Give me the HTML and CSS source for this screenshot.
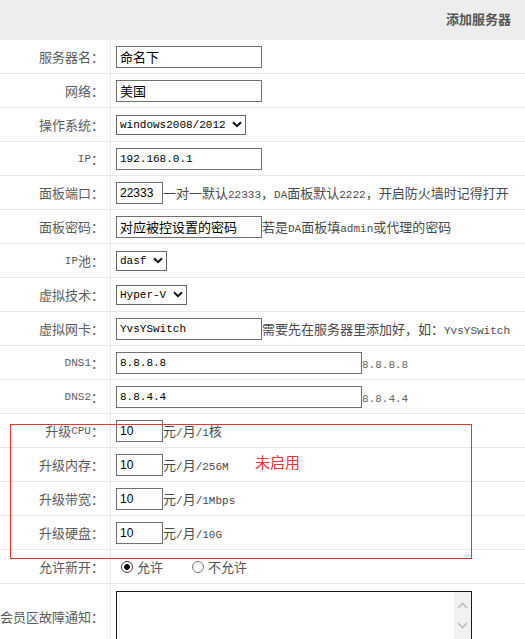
FILE: index.html
```html
<!DOCTYPE html>
<html>
<head>
<meta charset="utf-8">
<title>添加服务器</title>
<link rel="stylesheet" href="styles.css">
</head>
<body>
<div class="page">
  <div class="head">添加服务器</div>
  <div class="form">
    <div class="lbl">服务器名：</div>
    <div class="val"><input class="txt w146" value="命名下"></div>

    <div class="lbl">网络：</div>
    <div class="val"><input class="txt w146" value="美国"></div>

    <div class="lbl">操作系统：</div>
    <div class="val">
      <span class="sel"><select><option>windows2008/2012</option></select><svg class="chev" width="10" height="7" viewBox="0 0 10 7"><path d="M1 1.2L5 5.2L9 1.2" fill="none" stroke="#111" stroke-width="2"/></svg></span>
    </div>

    <div class="lbl"><span class="en">IP</span>：</div>
    <div class="val"><input class="txt mono w146" value="192.168.0.1"></div>

    <div class="lbl">面板端口：</div>
    <div class="val"><input class="txt sans w47" value="22333"><span class="hint">一对一默认<span class="en">22333</span>，<span class="en">DA</span>面板默认<span class="en">2222</span>，开启防火墙时记得打开</span></div>

    <div class="lbl">面板密码：</div>
    <div class="val"><input class="txt w146" value="对应被控设置的密码"><span class="hint">若是<span class="en">DA</span>面板填<span class="en">admin</span>或代理的密码</span></div>

    <div class="lbl"><span class="en">IP</span>池：</div>
    <div class="val">
      <span class="sel"><select><option>dasf</option></select><svg class="chev" width="10" height="7" viewBox="0 0 10 7"><path d="M1 1.2L5 5.2L9 1.2" fill="none" stroke="#111" stroke-width="2"/></svg></span>
    </div>

    <div class="lbl">虚拟技术：</div>
    <div class="val">
      <span class="sel"><select><option>Hyper-V</option></select><svg class="chev" width="10" height="7" viewBox="0 0 10 7"><path d="M1 1.2L5 5.2L9 1.2" fill="none" stroke="#111" stroke-width="2"/></svg></span>
    </div>

    <div class="lbl">虚拟网卡：</div>
    <div class="val"><input class="txt mono w146" value="YvsYSwitch"><span class="hint">需要先在服务器里添加好，如：<span class="en">YvsYSwitch</span></span></div>

    <div class="lbl"><span class="en">DNS1</span>：</div>
    <div class="val"><input class="txt mono w246" value="8.8.8.8"><span class="hint light"><span class="en">8.8.8.8</span></span></div>

    <div class="lbl"><span class="en">DNS2</span>：</div>
    <div class="val"><input class="txt mono w246" value="8.8.4.4"><span class="hint light"><span class="en">8.8.4.4</span></span></div>

    <div class="lbl">升级<span class="en">CPU</span>：</div>
    <div class="val"><input class="txt sans w47" value="10"><span class="hint">元<span class="en">/</span>月<span class="en">/1</span>核</span></div>

    <div class="lbl">升级内存：</div>
    <div class="val"><input class="txt sans w47" value="10"><span class="hint">元<span class="en">/</span>月<span class="en">/256M</span></span></div>

    <div class="lbl">升级带宽：</div>
    <div class="val"><input class="txt sans w47" value="10"><span class="hint">元<span class="en">/</span>月<span class="en">/1Mbps</span></span></div>

    <div class="lbl">升级硬盘：</div>
    <div class="val"><input class="txt sans w47" value="10"><span class="hint">元<span class="en">/</span>月<span class="en">/10G</span></span></div>

    <div class="lbl">允许新开：</div>
    <div class="val">
      <label class="opt"><input type="radio" name="allow" checked>允许</label>
      <label class="opt"><input type="radio" name="allow">不允许</label>
    </div>

    <div class="lbl">会员区故障通知：</div>
    <div class="val tall">
      <div class="ta">
        <textarea></textarea>
        <div class="sb">
          <svg width="11" height="7" viewBox="0 0 11 7"><path d="M1 6L5.5 1.5L10 6" fill="none" stroke="#bdbdbd" stroke-width="1.6"/></svg>
          <svg width="11" height="7" viewBox="0 0 11 7"><path d="M1 1L5.5 5.5L10 1" fill="none" stroke="#bdbdbd" stroke-width="1.6"/></svg>
        </div>
      </div>
    </div>
  </div>
  <div class="redbox"><span class="note">未启用</span></div>
</div>
</body>
</html>
```

FILE: styles.css
```css
* { box-sizing: border-box; }
html, body { margin: 0; padding: 0; background: #fff; }
body {
  font-family: "Noto Sans CJK SC", sans-serif;
  font-size: 13px;
  color: #5c5c5c;
}
.page { position: relative; width: 525px; }
.head {
  height: 40px;
  background: #ededed;
  text-align: right;
  padding-right: 14px;
  font-weight: bold;
  line-height: 38px;
  color: #555;
}
.form { display: grid; grid-template-columns: 111px 1fr; }
.lbl, .val {
  min-height: 34px;
  border-bottom: 1px solid #e8e8e8;
  display: flex;
  align-items: center;
  white-space: nowrap;
}
.lbl {
  justify-content: flex-end;
  padding-right: 6px;
  border-right: 1px solid #e8e8e8;
}
.val { padding-left: 5px; }
.val.tall { align-items: flex-start; padding-top: 7px; padding-bottom: 5px; }
.en { font-family: "Liberation Mono", monospace; font-size: 11px; }
.hint { color: #4a4a4a; }
.hint.light { color: #666; }
.txt {
  height: 22px;
  margin: 0;
  padding: 0 3px;
  border: 1px solid #707070;
  background: #fff;
  color: #000;
  font-family: "Noto Sans CJK SC", sans-serif;
  font-size: 13px;
  outline: none;
}
.txt.mono { font-family: "Liberation Mono", monospace; font-size: 11px; }
.txt.sans { font-family: "Liberation Sans", sans-serif; font-size: 12px; }
.w146 { width: 146px; }
.w47 { width: 47px; }
.w246 { width: 246px; }
.sel {
  display: inline-flex;
  align-items: center;
  gap: 6px;
  height: 20px;
  padding: 0 3px;
  border: 1px solid #666;
  background: #fff;
}
.sel select {
  appearance: none;
  -webkit-appearance: none;
  border: 0;
  margin: 0;
  padding: 0;
  background: transparent;
  color: #000;
  font-family: "Liberation Mono", monospace;
  font-size: 11px;
  outline: none;
}
.chev { display: block; }
.opt { display: inline-flex; align-items: center; color: #555; }
.opt input {
  appearance: none;
  -webkit-appearance: none;
  width: 12px;
  height: 12px;
  margin: 0 4px 0 5px;
  border: 1px solid #777;
  border-radius: 50%;
  background: #fff;
}
.opt input:checked {
  border-color: #444;
  background: radial-gradient(circle, #111 0 2.6px, #fff 3.2px);
}
.opt + .opt { margin-left: 24px; }
.ta {
  display: flex;
  width: 356px;
  height: 52px;
  border: 1px solid #1a1a1a;
  background: #fff;
}
.ta textarea {
  flex: 1;
  border: 0;
  margin: 0;
  padding: 2px 3px;
  resize: none;
  outline: none;
  overflow: hidden;
  font-family: "Noto Sans CJK SC", sans-serif;
  font-size: 13px;
}
.sb {
  width: 17px;
  background: #f1f1f1;
  display: flex;
  flex-direction: column;
  align-items: center;
  padding-top: 10px;
  gap: 13px;
}
.sb svg { display: block; }
.redbox {
  position: absolute;
  left: 10px;
  top: 424px;
  width: 462px;
  height: 135px;
  border: 1px solid #ee3333;
  padding: 29px 0 0 244px;
}
.note {
  display: block;
  color: #ee3333;
  font-size: 15px;
  line-height: 15px;
}
```
